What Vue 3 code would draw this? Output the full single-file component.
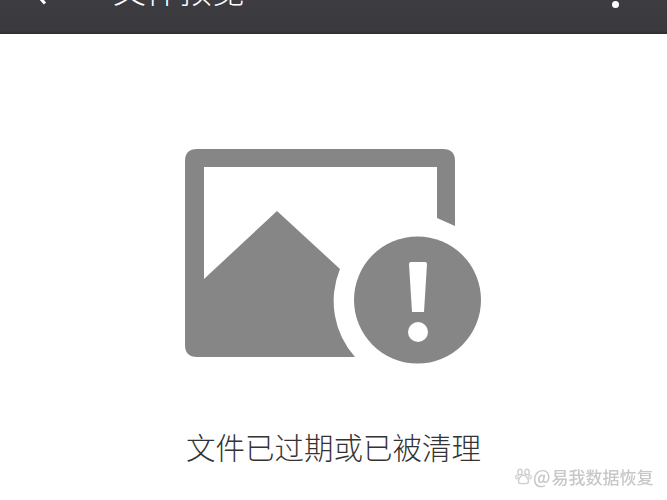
<template>
  <div class="page">
    <header class="bar">
      <svg class="back" width="20" height="10" viewBox="0 0 20 10">
        <path d="M10 -2 L15 3.5" fill="none" stroke="#fff" stroke-width="3" />
      </svg>
      <span class="title">文件预览</span>
      <span class="more"></span>
    </header>

    <main class="body">
      <svg class="pic" width="300" height="220" viewBox="0 0 300 220">
        <!-- 坐标原点对应页面 (183, 147) -->
        <path
          fill="#868686"
          fill-rule="evenodd"
          d="M14 2 H260 Q272 2 272 14 V79 L254 71 V20 H21 V132 L94 64 L157 122 A84 84 0 0 0 172 210 H14 Q2 210 2 198 V14 Q2 2 14 2 Z"
        />
        <circle cx="234.5" cy="153" r="63.5" fill="#868686" />
        <path d="M226 117 Q226 115 228 115 H242 Q244 115 244 117 L241 165 H229 Z" fill="#fff" />
        <circle cx="235" cy="185" r="10" fill="#fff" />
      </svg>
      <p class="msg">文件已过期或已被清理</p>
    </main>

    <div class="mark">
      <svg class="paw" width="17" height="17" viewBox="0 0 17 17">
        <ellipse cx="5" cy="4" rx="2.2" ry="2.8" fill="none" stroke="#cfcfcf" stroke-width="1.4" />
        <ellipse cx="12" cy="4" rx="2.2" ry="2.8" fill="none" stroke="#cfcfcf" stroke-width="1.4" />
        <ellipse cx="2" cy="9" rx="1.3" ry="2" fill="none" stroke="#cfcfcf" stroke-width="1.2" />
        <ellipse cx="15" cy="9" rx="1.3" ry="2" fill="none" stroke="#cfcfcf" stroke-width="1.2" />
        <path d="M8.5 7 C11 7 14 11.5 13.5 14 C13 16.5 10 15.5 8.5 15.5 C7 15.5 4 16.5 3.5 14 C3 11.5 6 7 8.5 7 Z" fill="none" stroke="#cfcfcf" stroke-width="1.4" />
      </svg>
      <span class="at">@</span>
      <span>易我数据恢复</span>
    </div>
  </div>
</template>

<script setup>
</script>

<style scoped>
.page {
  position: relative;
  width: 667px;
  height: 500px;
  overflow: hidden;
  background: #fff;
  font-family: "Noto Sans CJK SC", "Liberation Sans", sans-serif;
}
.bar {
  display: flex;
  align-items: flex-start;
  height: 34px;
  overflow: hidden;
  background: linear-gradient(#3d3d41, #3a3a3e 90%, #2e2e30);
}
.back { margin-left: 30px; flex-shrink: 0; }
.title {
  margin: -32px 0 0 63px;
  font-size: 33px;
  line-height: 42px;
  font-weight: 300;
  color: #fff;
  white-space: nowrap;
}
.more {
  width: 7px;
  height: 7px;
  margin: 1px 48px 0 auto;
  border-radius: 50%;
  background: #fff;
}
.body {
  display: flex;
  flex-direction: column;
  align-items: flex-start;
}
.pic { margin: 113px 0 0 183px; display: block; filter: blur(0.4px); }
.msg {
  margin: 58px 0 0 186px;
  font-size: 29.5px;
  line-height: 42px;
  font-weight: 300;
  color: #333;
  white-space: nowrap;
}
.mark {
  position: absolute;
  left: 515px;
  top: 468px;
  display: flex;
  align-items: center;
  height: 17px;
  font-size: 17px;
  line-height: 17px;
  font-weight: 500;
  color: #c8c8c8;
  white-space: nowrap;
  filter: blur(0.4px);
}
.at { margin: 0 1px 0 1px; font-size: 18px; }
</style>
